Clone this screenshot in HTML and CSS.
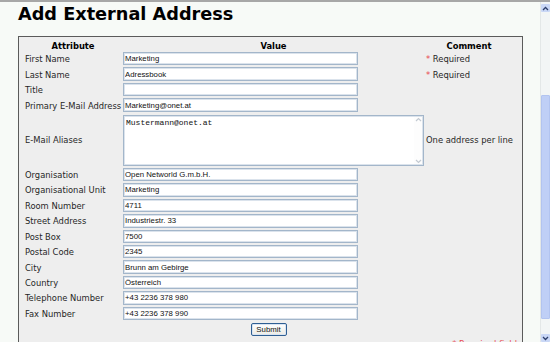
FILE: index.html
```html
<!DOCTYPE html>
<html lang="en">
<head>
  <meta charset="UTF-8" />
  <title>Add External Address</title>
  <link rel="stylesheet" href="styles.css">
</head>
<body>
  <div class="screen">
    <main class="page">
      <h1 class="page-title">Add External Address</h1>

      <form class="address-box" onsubmit="return false">
        <table class="address-table">
          <colgroup>
            <col class="col-label">
            <col class="col-value">
            <col class="col-note">
          </colgroup>
          <tr class="head">
            <th>Attribute</th>
            <th>Value</th>
            <th>Comment</th>
          </tr>
          <tr>
            <td class="label">First Name</td>
            <td><input class="field" type="text" value="Marketing"></td>
            <td class="note"><span class="req">*</span> Required</td>
          </tr>
          <tr>
            <td class="label">Last Name</td>
            <td><input class="field" type="text" value="Adressbook"></td>
            <td class="note"><span class="req">*</span> Required</td>
          </tr>
          <tr>
            <td class="label">Title</td>
            <td><input class="field" type="text" value=""></td>
            <td class="note"></td>
          </tr>
          <tr>
            <td class="label">Primary E-Mail Address</td>
            <td><input class="field" type="text" value="Marketing@onet.at"></td>
            <td class="note"></td>
          </tr>
          <tr>
            <td class="label">E-Mail Aliases</td>
            <td>
              <div class="aliases">
                <textarea class="aliases-text">Mustermann@onet.at</textarea>
                <span class="aliases-bar">
                  <svg width="7" height="5" viewBox="0 0 7 5"><polyline points="1,4 3.5,1.5 6,4" fill="none" stroke="#c3cad2" stroke-width="1.2"/></svg>
                  <svg width="7" height="5" viewBox="0 0 7 5"><polyline points="1,1 3.5,3.5 6,1" fill="none" stroke="#c3cad2" stroke-width="1.2"/></svg>
                </span>
              </div>
            </td>
            <td class="note">One address per line</td>
          </tr>
          <tr>
            <td class="label">Organisation</td>
            <td><input class="field" type="text" value="Open Networld G.m.b.H."></td>
            <td class="note"></td>
          </tr>
          <tr>
            <td class="label">Organisational Unit</td>
            <td><input class="field" type="text" value="Marketing"></td>
            <td class="note"></td>
          </tr>
          <tr>
            <td class="label">Room Number</td>
            <td><input class="field" type="text" value="4711"></td>
            <td class="note"></td>
          </tr>
          <tr>
            <td class="label">Street Address</td>
            <td><input class="field" type="text" value="Industriestr. 33"></td>
            <td class="note"></td>
          </tr>
          <tr>
            <td class="label">Post Box</td>
            <td><input class="field" type="text" value="7500"></td>
            <td class="note"></td>
          </tr>
          <tr>
            <td class="label">Postal Code</td>
            <td><input class="field" type="text" value="2345"></td>
            <td class="note"></td>
          </tr>
          <tr>
            <td class="label">City</td>
            <td><input class="field" type="text" value="Brunn am Gebirge"></td>
            <td class="note"></td>
          </tr>
          <tr>
            <td class="label">Country</td>
            <td><input class="field" type="text" value="Österreich"></td>
            <td class="note"></td>
          </tr>
          <tr>
            <td class="label">Telephone Number</td>
            <td><input class="field" type="text" value="+43 2236 378 980"></td>
            <td class="note"></td>
          </tr>
          <tr>
            <td class="label">Fax Number</td>
            <td><input class="field" type="text" value="+43 2236 378 990"></td>
            <td class="note"></td>
          </tr>
          <tr class="submit-row">
            <td colspan="3"><button class="submit" type="submit">Submit</button></td>
          </tr>
        </table>
        <div class="legend"><span class="req">*</span> Required field</div>
      </form>
    </main>

    <div class="scrollbar">
      <div class="sb-btn sb-up">
        <svg width="7" height="5" viewBox="0 0 7 5"><polyline points="1,4 3.5,1.5 6,4" fill="none" stroke="#2d3f6b" stroke-width="1.3"/></svg>
      </div>
      <div class="sb-space sb-space-top"></div>
      <div class="sb-thumb"></div>
      <div class="sb-space"></div>
      <div class="sb-btn sb-down">
        <svg width="7" height="5" viewBox="0 0 7 5"><polyline points="1,1 3.5,3.5 6,1" fill="none" stroke="#2d3f6b" stroke-width="1.3"/></svg>
      </div>
    </div>
  </div>
</body>
</html>
```

FILE: styles.css
```css
body {
  margin: 0;
  height: 342px;
  overflow: hidden;
  background-color: #f7faf7;
  border-top: 2px solid #a7a7a7;
  box-sizing: border-box;
  font-family: "DejaVu Sans Condensed", "DejaVu Sans", sans-serif;
  color: #262626;
}

.screen {
  display: flex;
  height: 340px;
}

.page {
  flex: 1;
  min-width: 0;
}

.page-title {
  margin: 2px 0 12px 18px;
  font-family: "DejaVu Sans", sans-serif;
  font-size: 17.7px;
  line-height: 20px;
  font-weight: bold;
  color: #000;
}

/* the grey form box */
.address-box {
  margin: 0 17px 0 18px;
  padding: 2px 0 0 5px;
  background-color: #eeeeee;
  border: 1px solid #5b5b5b;
  border-bottom: none;
  height: 320px;
  box-sizing: border-box;
}

.address-table {
  width: 489px;
  table-layout: fixed;
  border-collapse: collapse;
  font-size: 9.3px;
}

.col-label { width: 98px; }
.col-value { width: 303px; }
.col-note  { width: 88px; }

.address-table td,
.address-table th {
  padding: 1px;
  vertical-align: middle;
  white-space: nowrap;
}

.head th {
  height: 12px;
  padding: 0;
  font-weight: bold;
  color: #000;
  text-align: center;
}

.label {
  text-align: left;
}

.field {
  display: block;
  width: 235px;
  height: 13.45px;
  margin: 0;
  padding: 0 1px;
  box-sizing: border-box;
  border: 1px solid #a3b6ca;
  box-shadow: inset 0 0 0 1px #dbe3ec;
  background: #fff;
  font-family: "Liberation Sans", Arial, sans-serif;
  font-size: 7.8px;
  color: #111;
  outline: none;
}

.note {
  padding-left: 2px;
}

.req {
  color: #e8474f;
}

/* textarea with its little xp-style scrollbar */
.aliases {
  position: relative;
  width: 301px;
  height: 51px;
  margin-top: 1px;
}

.aliases-text {
  display: block;
  width: 100%;
  height: 100%;
  margin: 0;
  padding: 2px 2px;
  box-sizing: border-box;
  border: 1px solid #a3b6ca;
  box-shadow: inset 0 0 0 1px #dbe3ec;
  resize: none;
  overflow: hidden;
  font-family: "Liberation Mono", monospace;
  font-size: 8px;
  line-height: 10px;
  color: #111;
  outline: none;
}

.aliases-bar {
  position: absolute;
  top: 2px;
  right: 2px;
  bottom: 2px;
  width: 8px;
  display: flex;
  flex-direction: column;
  justify-content: space-between;
  align-items: center;
  background: #fdfdfd;
}

.submit-row td {
  text-align: center;
  padding: 2px 0 0;
}

.submit {
  width: 36px;
  height: 13px;
  padding: 0;
  border: 1px solid #2f5f93;
  border-radius: 2px;
  background: linear-gradient(#ffffff, #ecebe4);
  box-shadow: inset 0 0 0 1px #d9e4f2;
  font-family: "Liberation Sans", Arial, sans-serif;
  font-size: 7.8px;
  line-height: 11px;
  color: #111;
  cursor: pointer;
}

.legend {
  margin-top: 2px;
  text-align: right;
  padding-right: 5px;
  font-size: 9.3px;
  line-height: 12px;
  color: #e8474f;
}

/* window scrollbar */
.scrollbar {
  width: 9px;
  display: flex;
  flex-direction: column;
  background: #f2f5f5;
  border-left: 1px solid #e3e7e7;
}

.sb-btn {
  height: 8px;
  display: flex;
  align-items: center;
  justify-content: center;
  background: #c9d7f6;
  border-radius: 1px;
}

.sb-up {
  margin-top: 2px;
}

.sb-space {
  height: 15px;
}

.sb-space-top {
  height: 83px;
}

.sb-thumb {
  flex: 1;
  background: #bfcff6;
  border: 1px solid #b2c4f0;
  border-radius: 1px;
}
```
